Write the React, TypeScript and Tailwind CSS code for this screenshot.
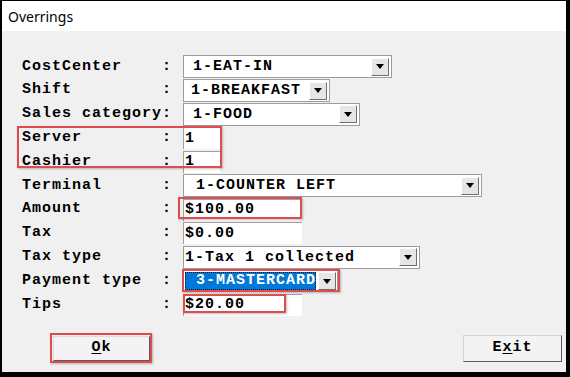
import React from 'react';

const mono = "font-['Liberation_Mono',monospace] font-bold text-[15px] tracking-[1px] text-black";

const DropButton: React.FC = () => (
  <div className="w-[18px] h-[18px] flex items-center justify-center bg-[#e6e6e6] border border-t-white border-l-white border-r-[#6f6f6f] border-b-[#6f6f6f] shrink-0">
    <svg width="8" height="5" viewBox="0 0 8 5">
      <path d="M0 0h8L4 5z" fill="#000" />
    </svg>
  </div>
);

const Combo: React.FC<{ className: string; textClass?: string; children: React.ReactNode }> = ({ className, textClass = 'pl-[9px]', children }) => (
  <div className={`h-[23px] flex items-center bg-white border border-[#9c9c9c] pr-[2px] ${className}`}>
    <div className={`flex-1 overflow-hidden whitespace-pre leading-none ${textClass}`}>{children}</div>
    <DropButton />
  </div>
);

const Field: React.FC<{ className: string; children: React.ReactNode }> = ({ className, children }) => (
  <div className={`h-[22px] flex items-center bg-white border-l border-t border-[#a0a0a0] pl-[1px] ${className}`}>
    {children}
  </div>
);

const Row: React.FC<{ label: string; children: React.ReactNode }> = ({ label, children }) => (
  <div className="flex items-center h-[23.8px]">
    <div className="w-[161px] flex shrink-0 whitespace-nowrap">
      <span className="w-[140px] shrink-0">{label}</span>
      <span>:</span>
    </div>
    {children}
  </div>
);

export default function App() {
  return (
    <div className="w-[570px] h-[377px] bg-black pt-px pl-[2px] pr-[4px] pb-[5px] flex flex-col">
      {/* Title bar */}
      <div className="h-[30px] bg-white flex items-center pl-[6px] pt-px font-['Noto_Sans',sans-serif] text-[14px] text-black">
        Overrings
      </div>

      {/* Body */}
      <div className={`flex-1 bg-[#f0f0f0] relative pt-[24px] pl-[20px] ${mono}`}>
        <Row label="CostCenter">
          <Combo className="w-[209px]">1-EAT-IN</Combo>
        </Row>
        <Row label="Shift">
          <Combo className="w-[147px]" textClass="pl-[7px]">1-BREAKFAST</Combo>
        </Row>
        <Row label="Sales category">
          <Combo className="w-[177px]">1-FOOD</Combo>
        </Row>
        <Row label="Server">
          <Field className="w-[37px]">1</Field>
        </Row>
        <Row label="Cashier">
          <Field className="w-[37px]">1</Field>
        </Row>
        <Row label="Terminal">
          <Combo className="w-[299px]" textClass="pl-[12px]">1-COUNTER LEFT</Combo>
        </Row>
        <Row label="Amount">
          <Field className="w-[119px]">$100.00</Field>
        </Row>
        <Row label="Tax">
          <Field className="w-[119px]">$0.00</Field>
        </Row>
        <Row label="Tax type">
          <Combo className="w-[237px]" textClass="pl-[1px]">1-Tax 1 collected</Combo>
        </Row>
        <Row label="Payment type">
          <div className="w-[155px] h-[22px] flex items-center bg-white border border-[#9c9c9c] pl-px pr-[1px]">
            <div className="flex-1 h-[18px] flex items-center bg-[#0078d7] text-white pl-[11px] outline-1 outline-dotted outline-[#1a1a1a] -outline-offset-1 mr-[2px] overflow-hidden whitespace-pre">
              3-MASTERCARD
            </div>
            <DropButton />
          </div>
        </Row>
        <Row label="Tips">
          <Field className="w-[119px]">$20.00</Field>
        </Row>

        {/* Buttons */}
        <div className="flex justify-between items-start mt-[18px] ml-[31px] pr-[4px]">
          <button className="w-[97px] h-[25px] mt-px flex items-center justify-center bg-[#f3f3f3] border border-t-[#dcdcdc] border-l-[#dcdcdc] border-r-[#5a5a5a] border-b-[#5a5a5a]">
            <span><span className="underline underline-offset-2">O</span>k</span>
          </button>
          <button className="w-[99px] h-[27px] flex items-center justify-center bg-[#f3f3f3] border border-t-[#d4d4d4] border-l-[#d4d4d4] border-r-[#5a5a5a] border-b-[#5a5a5a]">
            <span>E<span className="underline underline-offset-2">x</span>it</span>
          </button>
        </div>

        {/* Red annotation boxes */}
        <div className="absolute left-[15px] top-[95px] w-[205px] h-[42px] border-2 border-[#e04b4f] shadow-[1px_1px_2px_rgba(0,0,0,0.25)]" />
        <div className="absolute left-[176px] top-[166px] w-[124px] h-[22px] border-2 border-[#e04b4f] shadow-[1px_1px_2px_rgba(0,0,0,0.25)]" />
        <div className="absolute left-[180px] top-[238px] w-[158px] h-[23px] border-2 border-[#e04b4f] shadow-[1px_1px_2px_rgba(0,0,0,0.25)]" />
        <div className="absolute left-[181px] top-[263px] w-[103px] h-[19px] border-2 border-[#e04b4f] shadow-[1px_1px_2px_rgba(0,0,0,0.25)]" />
        <div className="absolute left-[48px] top-[302px] w-[102px] h-[30px] border-2 border-[#e04b4f] shadow-[1px_1px_2px_rgba(0,0,0,0.25)]" />
      </div>
    </div>
  );
}
